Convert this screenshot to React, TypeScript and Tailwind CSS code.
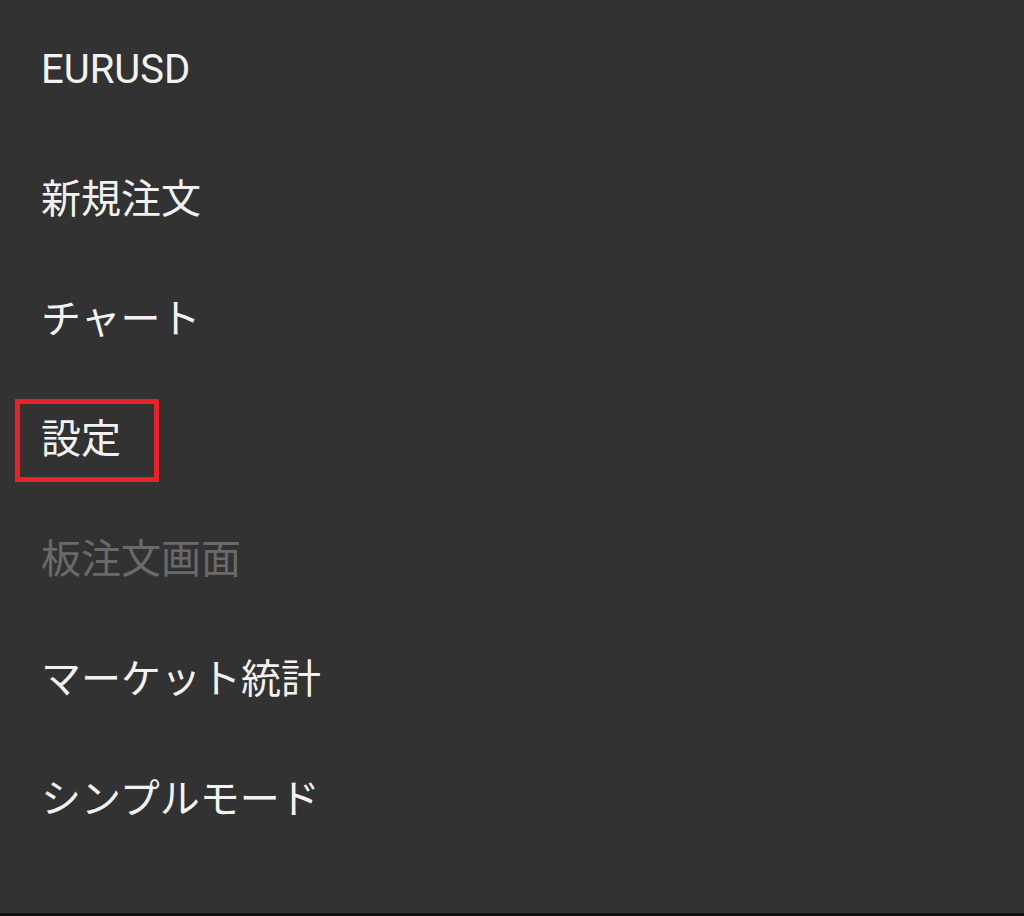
import React from 'react';

const items = [
  { label: '新規注文' },
  { label: 'チャート' },
  { label: '設定', selected: true },
  { label: '板注文画面', disabled: true },
  { label: 'マーケット統計' },
  { label: 'シンプルモード' },
];

export default function App() {
  return (
    <div
      className="w-[1024px] h-[916px] bg-[#121212] flex flex-col"
      style={{ fontFamily: 'Roboto, "Noto Sans CJK JP", sans-serif' }}
    >
      <div className="flex-1 bg-[#323232] flex flex-col">
        <div className="h-[140px] flex items-center pl-[41px] text-[40px] text-[#f2f2f2] leading-none">
          EURUSD
        </div>
        {items.map((item) => (
          <div key={item.label} className="h-[120px] flex items-center">
            {item.selected ? (
              <div className="ml-[15px] w-[144px] h-[83px] border-[5px] border-[#e8212b] flex items-center pl-[21px] text-[40px] leading-none text-[#f2f2f2]">
                {item.label}
              </div>
            ) : (
              <div
                className={
                  item.disabled
                    ? 'pl-[41px] text-[40px] leading-none text-[#6a6a6a]'
                    : 'pl-[41px] text-[40px] leading-none text-[#f2f2f2]'
                }
              >
                {item.label}
              </div>
            )}
          </div>
        ))}
      </div>
      <div className="h-[3px]" />
    </div>
  );
}
